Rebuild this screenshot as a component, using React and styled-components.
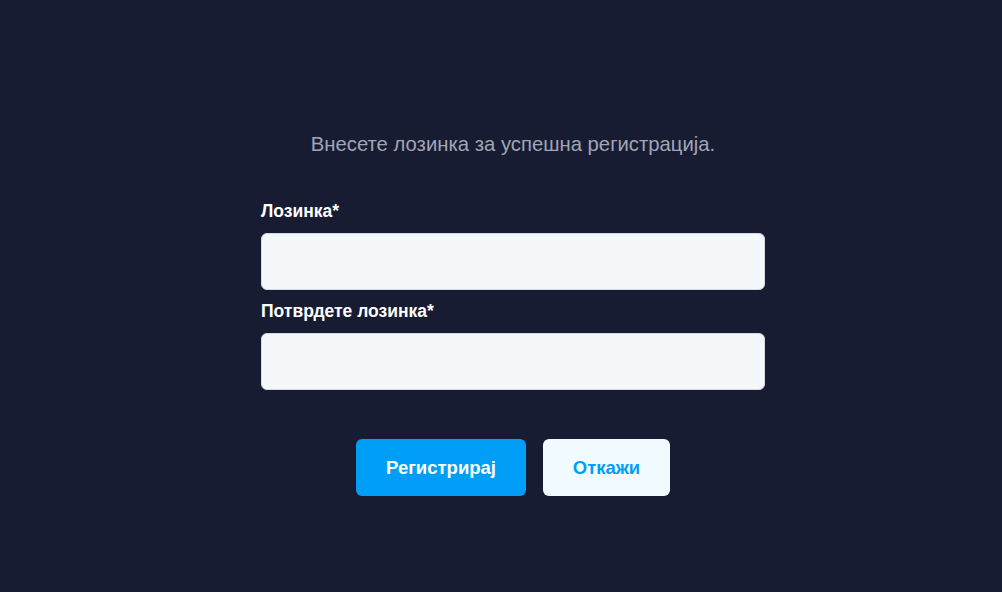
import React from "react";
import styled, { createGlobalStyle } from "styled-components";

const Global = createGlobalStyle`
  html, body { margin: 0; padding: 0; background: #181c32; }
  body { font-family: "Liberation Sans", Arial, sans-serif; }
  * { box-sizing: border-box; }
`;

const Page = styled.div`
  min-height: 592px;
  display: flex;
  justify-content: center;
  padding: 132px 0 0 24px;
`;

const Form = styled.form`
  width: 504px;
  display: flex;
  flex-direction: column;
`;

const Intro = styled.p`
  margin: 0 0 45px;
  text-align: center;
  font-size: 20.3px;
  line-height: 24px;
  color: #a1a5b7;
`;

const Field = styled.div`
  display: flex;
  flex-direction: column;
  margin-bottom: ${(p) => p.$mb}px;
`;

const Label = styled.label`
  font-size: 17.5px;
  font-weight: 700;
  line-height: 20px;
  color: #ffffff;
  margin-bottom: 12px;
`;

const Input = styled.input`
  height: 57px;
  width: 100%;
  border: 1px solid #d6d8e0;
  border-radius: 6px;
  background: #f5f8fa;
  font-size: 15px;
  padding: 0 16px;
  outline: none;
`;

const Actions = styled.div`
  display: flex;
  justify-content: center;
  gap: 17px;
`;

const Button = styled.button`
  height: 57px;
  width: ${(p) => p.$w}px;
  border: none;
  border-radius: 6px;
  font-family: "Liberation Sans", Arial, sans-serif;
  font-size: 18.5px;
  font-weight: 700;
  cursor: pointer;
  background: ${(p) => (p.$primary ? "#009ef7" : "#f1faff")};
  color: ${(p) => (p.$primary ? "#ffffff" : "#009ef7")};
`;

export default function App() {
  return (
    <>
      <Global />
      <Page>
        <Form onSubmit={(e) => e.preventDefault()}>
          <Intro>Внесете лозинка за успешна регистрација.</Intro>
          <Field $mb={11}>
            <Label>Лозинка*</Label>
            <Input type="password" />
          </Field>
          <Field $mb={49}>
            <Label>Потврдете лозинка*</Label>
            <Input type="password" />
          </Field>
          <Actions>
            <Button type="submit" $primary $w={170}>Регистрирај</Button>
            <Button type="button" $w={127}>Откажи</Button>
          </Actions>
        </Form>
      </Page>
    </>
  );
}
